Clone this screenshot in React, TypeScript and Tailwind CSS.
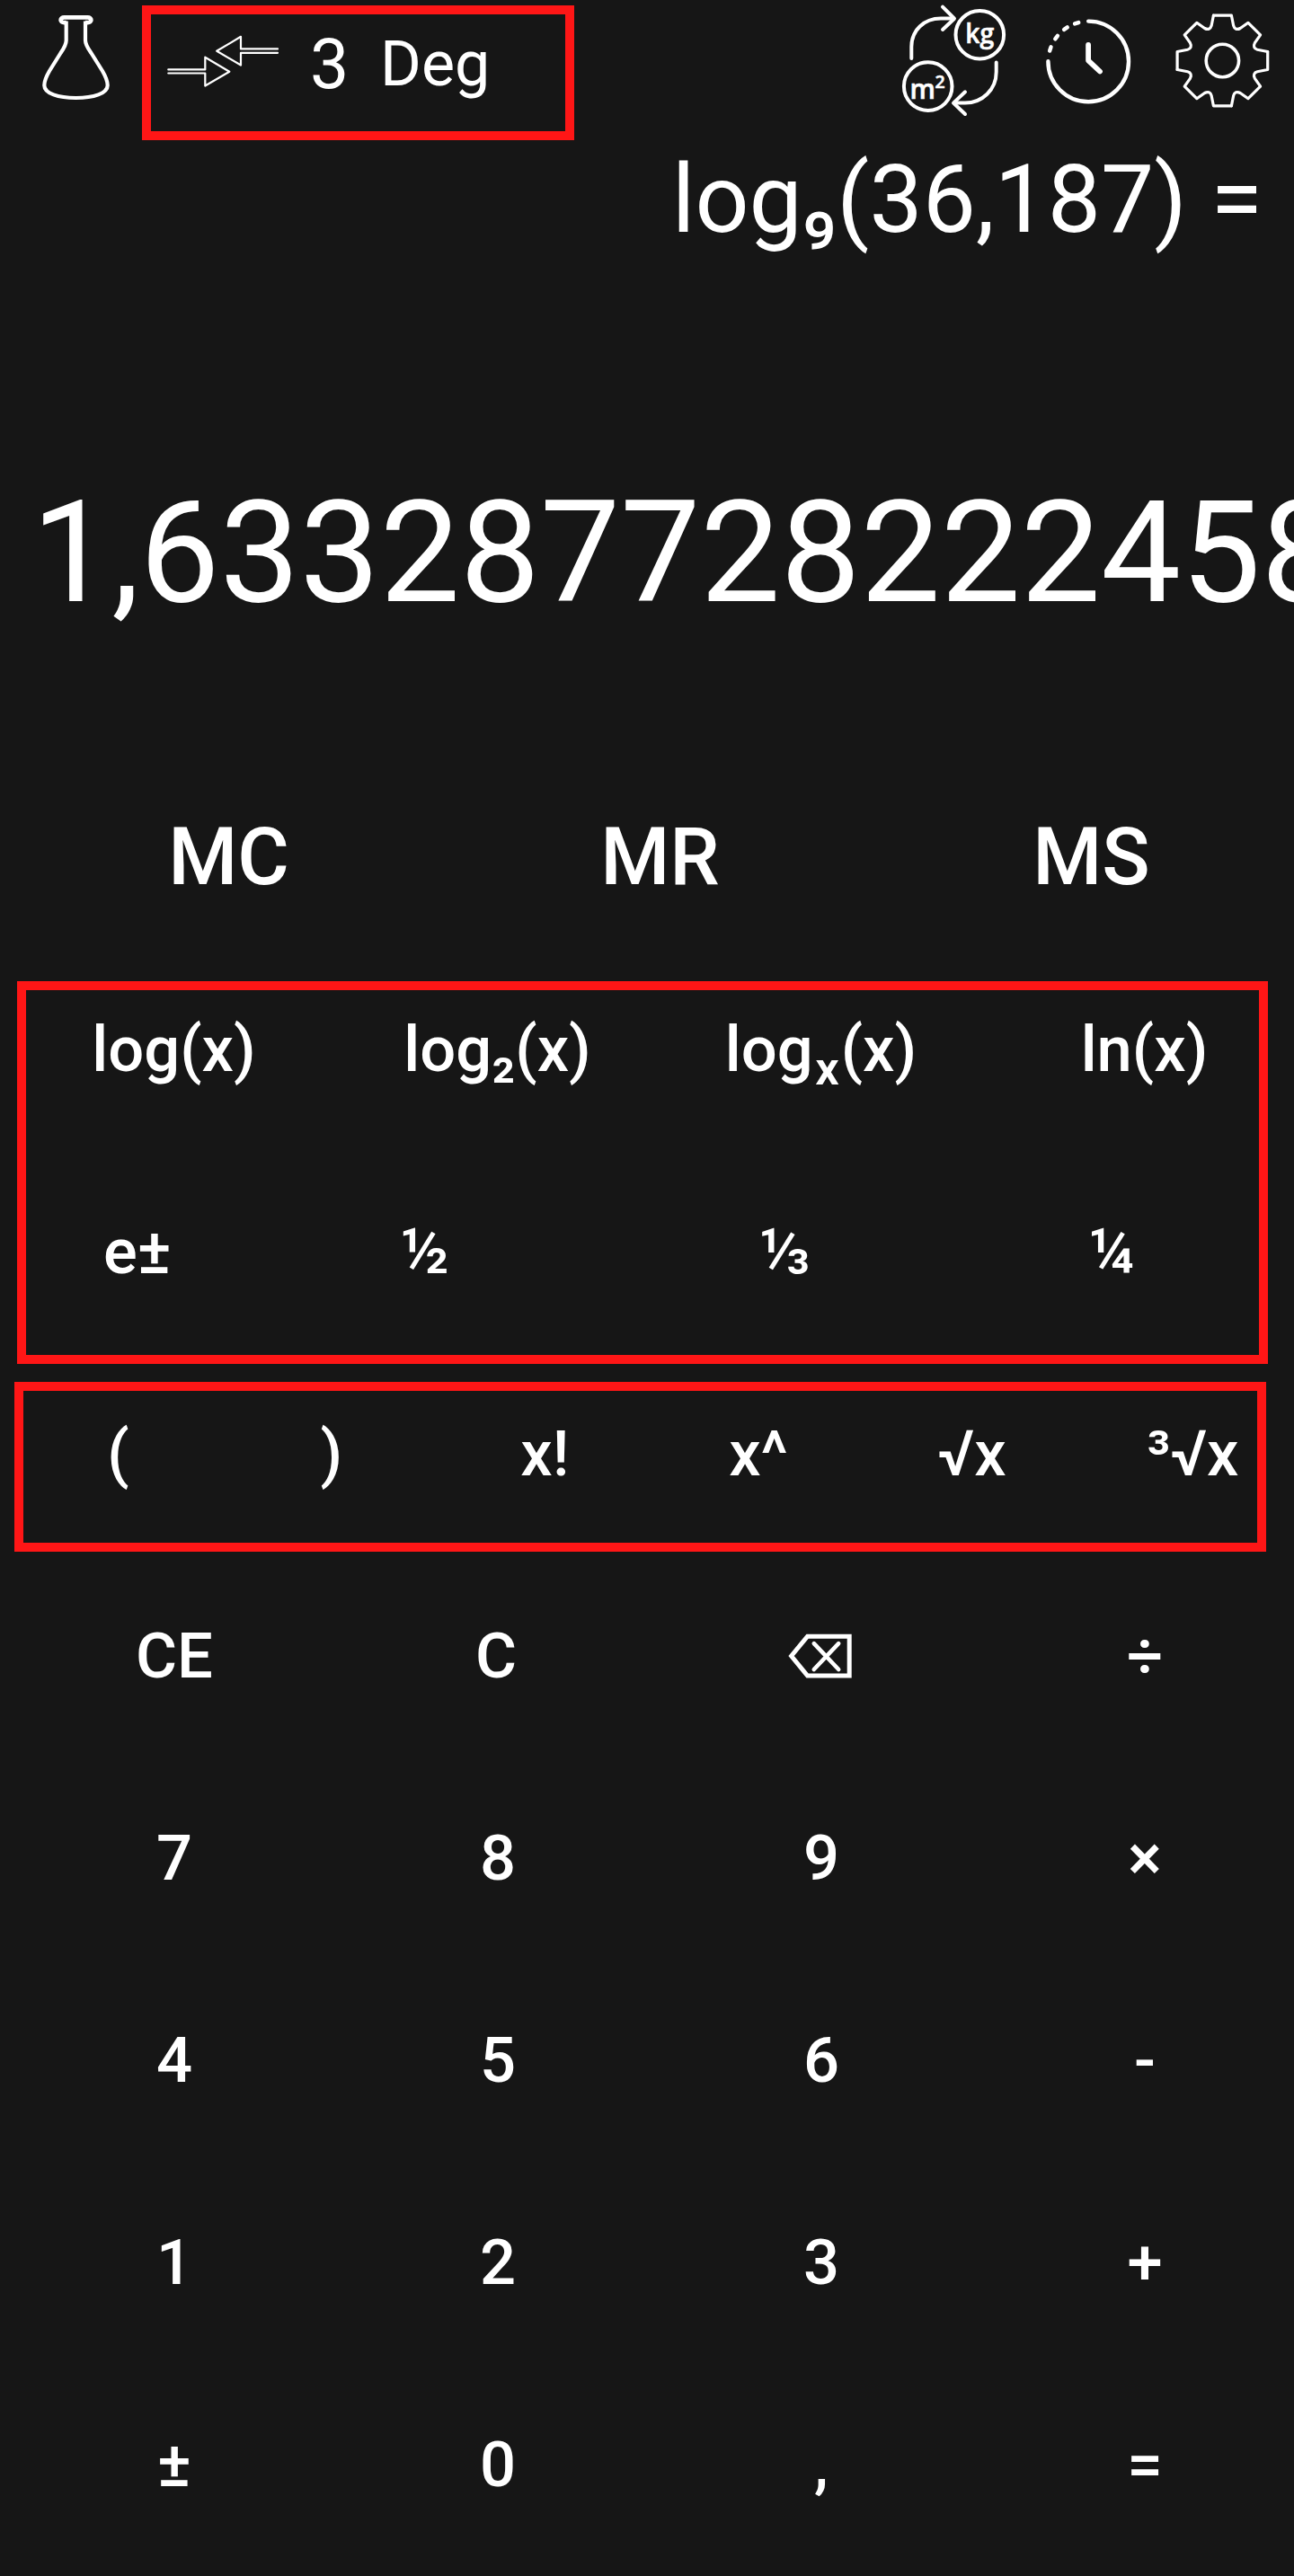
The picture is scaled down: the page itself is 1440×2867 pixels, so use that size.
import React from "react";

function FlaskIcon() {
  return (
    <svg width="158" height="130" viewBox="0 0 158 130" fill="none" stroke="#fff" strokeWidth="4.2" strokeLinejoin="round" className="shrink-0">
      <path d="M73.7 25.2H71.5C66.4 25.2 66.4 19.4 71.5 19.4H97.5C102.6 19.4 102.6 25.2 97.5 25.2H95" strokeWidth="4.8" />
      <path d="M73.7 23.5V45C73.7 50 71 54 67.5 59L55 79C51.5 85 49.3 90 49.3 95C49.3 104 65 109 84.5 109C104 109 119.7 104 119.7 95C119.7 90 117.5 85 114 79L101.5 59C98 54 95 50 95 45V23.5" />
    </svg>
  );
}

function ArrowsIcon() {
  return (
    <svg width="177" height="100" viewBox="0 0 177 100" fill="none" stroke="#fff" strokeWidth="2.2" strokeLinecap="round" strokeLinejoin="round" className="shrink-0">
      <path d="M19.3 61.4H60.3V47.7L87.3 63.7L60.3 79.5V65.5H19.3" />
      <path d="M141 38.4H100V24.8L73.2 40.8L100 56.5V42.8H141" />
    </svg>
  );
}

function UnitsIcon() {
  return (
    <svg width="180" height="140" viewBox="0 0 180 140" fill="none" stroke="#fff" strokeWidth="4" strokeLinecap="round" strokeLinejoin="round" className="shrink-0">
      <circle cx="110.3" cy="38.7" r="26.8" />
      <circle cx="52.7" cy="96.1" r="26.8" />
      <path d="M34.3 65V52C34.3 34 48 20.6 67 20.6H81" />
      <path d="M69 7.7L82 20.7L69 33" />
      <path d="M128.7 69.5V80C128.7 100 113 114.5 94 114.6H82" />
      <path d="M94 102.3L81 114.6L94 127" />
      <g fill="#fff" strokeWidth="0.6" fontFamily="Open Sans, sans-serif" fontWeight="600">
        <text x="94.2" y="47.8" fontSize="31.5" textLength="32" lengthAdjust="spacingAndGlyphs">kg</text>
        <text x="32.6" y="109.6" fontSize="30" textLength="28.4" lengthAdjust="spacingAndGlyphs">m</text>
        <text x="60.4" y="97.6" fontSize="19.5">2</text>
      </g>
    </svg>
  );
}

function ClockIcon() {
  return (
    <svg width="130" height="140" viewBox="0 0 130 140" fill="none" stroke="#fff" strokeWidth="4.4" strokeLinecap="round" strokeLinejoin="round" className="shrink-0">
      <path d="M51.2 23.6A44.8 44.8 0 1 1 6.4 68.2" />
      {[-17, -34.5, -53, -71.8].map((angle) => (
        <path key={angle} d="M49 23.8H53.4" transform={`rotate(${angle} 51.2 68.4)`} />
      ))}
      <path d="M51.1 50V67.3L64 79.5" strokeWidth="5.8" />
    </svg>
  );
}

function GearIcon() {
  return (
    <svg width="150" height="140" viewBox="0 0 150 140" fill="none" stroke="#fff" strokeWidth="3.2" strokeLinecap="round" strokeLinejoin="round" className="shrink-0">
      <g transform="translate(70.4 67.5)">
        <circle r="18.2" strokeWidth="3.6" />
        {[0, 90, 180, 270].map((angle) => (
          <path key={angle} transform={`rotate(${angle})`} d="M-10 -50.3H10L12.3 -38.8C13.2 -35.2 16.2 -34 19.8 -36L28.6 -42.2L42.2 -28.6L36 -19.8C34 -16.2 35.2 -13.2 38.8 -12.3L50.3 -10" />
        ))}
      </g>
    </svg>
  );
}

function BackspaceIcon() {
  return (
    <svg width="72" height="50" viewBox="0 0 72 50" fill="none" stroke="#fff" strokeWidth="5" className="mr-[2px]">
      <path d="M3.6 25L21.6 3.2H68.2V47H21.6Z" />
      <path d="M28.8 11.2L56.2 40M56.2 11.2L28.8 40" strokeLinecap="round" strokeWidth="4.6" />
    </svg>
  );
}

function OneThird() {
  return (
    <span className="flex">
      <span>¹</span>
      <span className="-ml-[15.7px]">⁄</span>
      <span className="relative -top-[12px] -ml-[10.7px]">₃</span>
    </span>
  );
}

function Key({ children }: { children: React.ReactNode }) {
  return <button className="flex h-[100px] items-center justify-center whitespace-nowrap">{children}</button>;
}

const keypad: React.ReactNode[] = [
  "CE", <span className="mr-[4px]">C</span>, <BackspaceIcon />, "÷",
  "7", "8", "9", "×",
  "4", "5", "6", "-",
  "1", "2", "3", "+",
  "±", "0", ",", "=",
];

export default function App() {
  return (
    <div className="h-[2867px] w-[1440px] overflow-hidden bg-[#161616] font-['Roboto',sans-serif] text-[70.5px] leading-[100px] font-medium text-white">
      <header className="flex h-[162px] items-start font-normal">
        <FlaskIcon />
        <div className="mt-[6px] flex h-[150px] w-[481px] shrink-0 items-start border-[10px] border-[#ff1616]">
          <ArrowsIcon />
          <span className="mt-[6px] w-[78px] text-[77px]">3</span>
          <span className="mt-[5px] text-[70px]">Deg</span>
        </div>
        <div className="ml-[341px] flex">
          <UnitsIcon />
          <ClockIcon />
          <GearIcon />
        </div>
      </header>

      <section className="font-normal">
        <div className="pr-[35px] text-right text-[105.4px] leading-[120px]">log₉(36,187) =</div>
        <div className="mt-[243px] pl-[35px] text-[158.6px] leading-[180px] whitespace-nowrap">1,633287728222458</div>
      </section>

      <div className="mt-[199px] ml-[14.5px] grid grid-cols-[repeat(3,480px)] text-[88.2px]">
        <Key>MC</Key>
        <Key>MR</Key>
        <Key>MS</Key>
      </div>

      <section className="mt-[88px] ml-[19px] h-[426px] w-[1392px] border-[10px] border-[#ff1616] pt-4">
        <div className="-ml-[15.5px] grid h-[225px] grid-cols-[repeat(4,360px)]">
          <Key>log(x)</Key>
          <Key>log₂(x)</Key>
          <Key>
            log<span className="relative top-[20.5px] mr-[2px] ml-[2.4px] text-[52.5px] font-semibold">x</span>(x)
          </Key>
          <Key>ln(x)</Key>
        </div>
        <div className="grid grid-cols-[331px_397.8px_368px_auto] justify-items-start pl-[86px]">
          <Key>e±</Key>
          <Key>½</Key>
          <Key><OneThird /></Key>
          <Key>¼</Key>
        </div>
      </section>

      <section className="mt-[20px] ml-[16px] grid h-[189px] w-[1393px] grid-cols-[211px_repeat(4,237.6px)_auto] border-[10px] border-[#ff1616] pt-5 [&>*:last-child]:ml-[76px] [&>*:last-child]:justify-start [&>*:nth-child(n+2)]:translate-x-[13px]">
        <Key>(</Key>
        <Key>)</Key>
        <Key>x!</Key>
        <Key>x^</Key>
        <Key>√x</Key>
        <Key>³√x</Key>
      </section>

      <section className="mt-[66px] ml-[14px] grid auto-rows-[225px] grid-cols-[repeat(4,360px)]">
        {keypad.map((label, i) => (
          <Key key={i}>{label}</Key>
        ))}
      </section>
    </div>
  );
}
